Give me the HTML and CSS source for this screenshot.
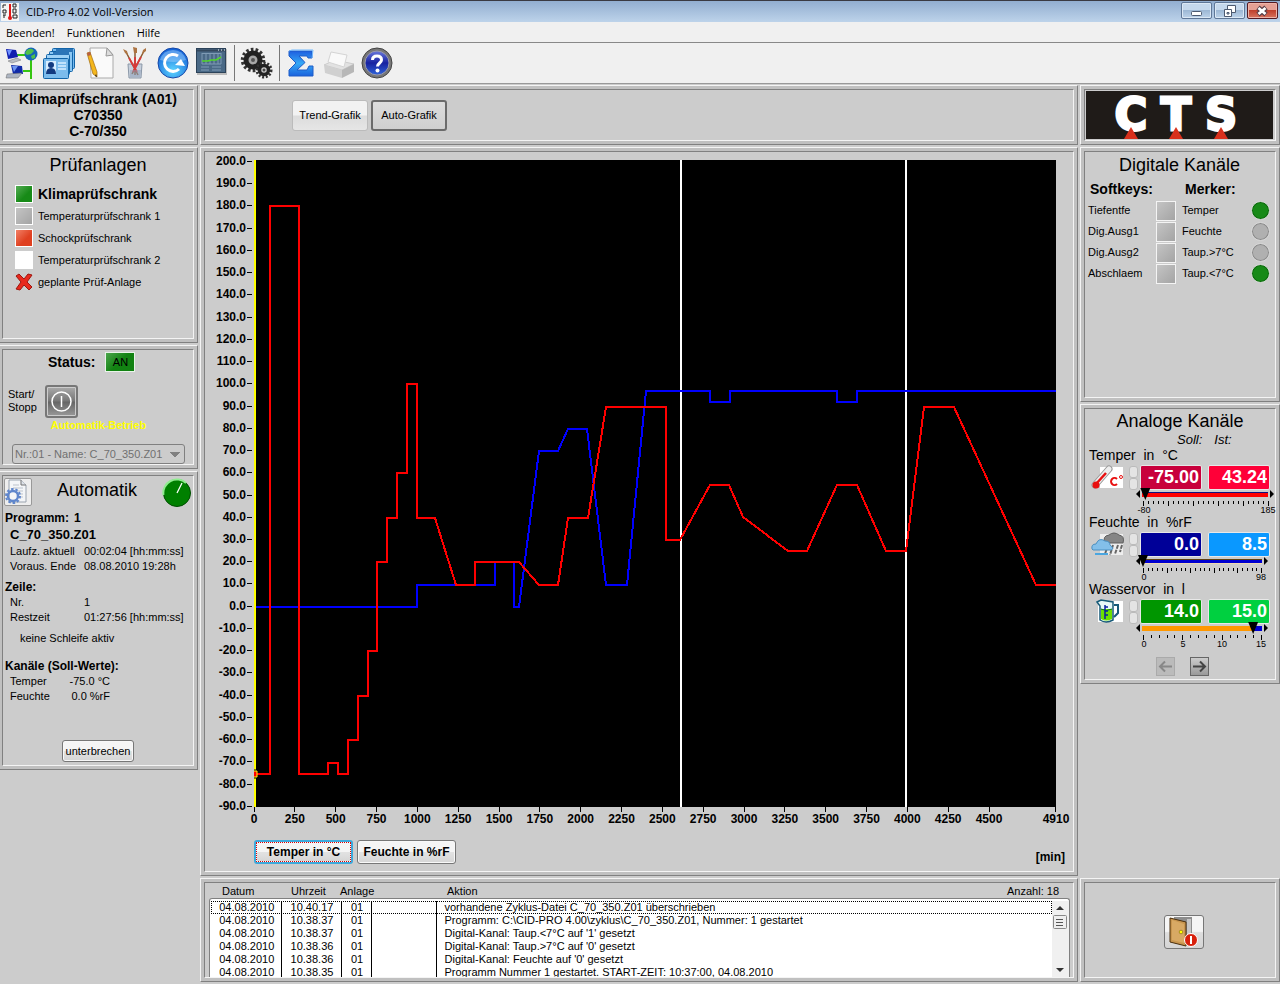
FILE: index.html
```html
<!DOCTYPE html>
<html lang="de">
<head>
<meta charset="utf-8">
<title>CID-Pro 4.02 Voll-Version</title>
<link rel="stylesheet" href="styles.css">
</head>
<body>
<header class="titlebar">
  <svg class="app-icon" width="18" height="18" viewBox="0 0 18 18"><rect width="18" height="18" fill="#f4f4f4"/><path d="M5 2H2V5M2 7H5V10H2ZM2 12H5M3 12V15M12 1H15V4H12ZM12 6H15V10H12ZM12 12H16V15H12Z" fill="none" stroke="#222" stroke-width="1"/><path d="M9 1V14" stroke="#e01818" stroke-width="2"/><circle cx="9" cy="15" r="2" fill="#e01818"/></svg>
  <span class="title-text">CID-Pro 4.02 Voll-Version</span>
  <div class="window-buttons">
    <button class="win-btn" aria-label="Minimieren"><svg width="28" height="14" viewBox="0 0 28 14"><rect x="9.500" y="7.500" width="10" height="4" rx="1" fill="#fff" stroke="#4d5a70"/></svg></button>
    <button class="win-btn" aria-label="Wiederherstellen"><svg width="28" height="14" viewBox="0 0 28 14"><path d="M12.500 1.500H20.500V8.500H12.500Z" fill="#fff" stroke="#4d5a70"/><path d="M9.500 5.500H16.500V12.500H9.500Z" fill="#fff" stroke="#4d5a70"/><path d="M12 8.500H14V10H12Z" fill="#b8cbe0" stroke="#4d5a70"/></svg></button>
    <button class="win-btn win-close" aria-label="Schließen"><svg width="28" height="14" viewBox="0 0 28 14"><path d="M10 3.500L18 10.500M18 3.500L10 10.500" stroke="#5a4048" stroke-width="5"/><path d="M10.500 4L17.500 10M17.500 4L10.500 10" stroke="#fff" stroke-width="2.800"/></svg></button>
  </div>
</header>
<nav class="menubar">
  <button class="menu-item">Beenden!</button>
  <button class="menu-item">Funktionen</button>
  <button class="menu-item">Hilfe</button>
</nav>
<div class="toolbar" role="toolbar">
  <button class="tool" aria-label="Netzwerk"><svg width="34" height="34" viewBox="0 0 34 34"><path d="M13 9H26M27 12V33M19 25H27" fill="none" stroke="#35c512" stroke-width="2"/><path d="M2 3L12 4 14 11 4 13Z" fill="#101fb0"/><path d="M3 4L8 4 5 10Z" fill="#6f92ff"/><path d="M4 15L13 12 17 14 8 17Z" fill="#b8bcc4" stroke="#777" stroke-width=".5"/><circle cx="27" cy="8" r="6.500" fill="#1565b8"/><path d="M23 4Q28 1 30 5L27 8 23 9 21 7ZM27 10L31 8 31 12 28 13Z" fill="#4fc04a"/><path d="M7 19L18 20 19 28 9 28Z" fill="#102aa8"/><path d="M8 20L14 20 10 26Z" fill="#6d95f0"/><path d="M3 28L18 27 14 32 2 32Z" fill="#aeb6c2" stroke="#666" stroke-width=".5"/></svg></button>
  <button class="tool" aria-label="Benutzer"><svg width="34" height="34" viewBox="0 0 34 34"><g stroke="#1264a8"><rect x="10.500" y="2.500" width="22" height="20" rx="1" fill="#76b9ee"/><rect x="7.500" y="5.500" width="23" height="20" rx="1" fill="#8cc8f4"/><rect x="4.500" y="8.500" width="23" height="20" rx="1" fill="#9fd2f7"/><rect x="1.500" y="12.500" width="25" height="20" rx="1" fill="#7bbbec"/></g><path d="M14 3H31V6H14ZM11 6H27V9H11Z" fill="#2c75b8"/><rect x="4" y="15" width="10" height="13" fill="#d8eeff"/><circle cx="9" cy="19" r="3" fill="#123a80"/><path d="M4 28Q4 22 9 22T14 28Z" fill="#123a80"/><path d="M16 17H24M16 20H24M16 23H24" stroke="#d8eeff" stroke-width="1.500"/></svg></button>
  <button class="tool" aria-label="Dokument"><svg width="34" height="34" viewBox="0 0 34 34"><path d="M10 2H27L33 9V32H11Z" fill="#fafafa" stroke="#aaa"/><path d="M27 2L26 10 33 9Z" fill="#ddd" stroke="#999"/><path d="M7 7L10 6 17 26 17 31 13 28Z" fill="#f4b71c" stroke="#a06a10" stroke-width=".7"/><path d="M7 7L10 6 11 9 8 10Z" fill="#b65f45"/><path d="M16 28L17 31 15 30Z" fill="#222"/></svg></button>
  <button class="tool" aria-label="Pinsel"><svg width="34" height="34" viewBox="0 0 34 34"><path d="M10 18L11 32H23L24 18Z" fill="#c7d0dc" stroke="#8b98a8"/><path d="M8 6L20 29M17 5L17 29M26 5L14 28" stroke="#8a5a30" stroke-width="1.500"/><path d="M11 12L19 26M17 11V22M23 11L15 26" stroke="#d83a3a" stroke-width="1.800"/><path d="M5 3L9 5 10 9 7 7ZM15 1L19 2 19 7 16 7ZM28 2L28 5 24 8 25 4Z" fill="#ad7442"/><path d="M12 24L23 24 22 31H12Z" fill="#8e9eb8" opacity=".55"/></svg></button>
  <button class="tool" aria-label="Aktualisieren"><svg width="34" height="34" viewBox="0 0 34 34"><defs><radialGradient id="gBlue" cx=".5" cy=".75" r=".7"><stop offset="0" stop-color="#5cd4ff"/><stop offset="1" stop-color="#1464d8"/></radialGradient></defs><circle cx="17" cy="17" r="15" fill="url(#gBlue)" stroke="#1748a8"/><path d="M4 14Q7 4 17 4T30 14Q18 18 4 14Z" fill="#a9d5ff" opacity=".45"/><path d="M22 10A8.500 8.500 0 1 0 23 23" fill="none" stroke="#fff" stroke-width="3"/><path d="M19 19L25 13 29 20Z" fill="#fff"/></svg></button>
  <button class="tool" aria-label="Grafik"><svg width="34" height="34" viewBox="0 0 34 34"><rect x="3" y="3" width="30" height="26" fill="#bbb"/><rect x="2.500" y="2.500" width="29" height="24" fill="#4a6986" stroke="#2b4259"/><path d="M3 4.500H31" stroke="#34495e" stroke-width="2"/><path d="M24 4H25M27 4H28M30 4H31" stroke="#fff"/><path d="M8 7V18M12 7V18M16 7V18M20 7V18M24 7V18M27 7V18M8 7.500H27M8 18H27M7 21H15M18 21H27M7 24H15M18 24H27" fill="none" stroke="#7f9bb5"/><path d="M8 15H14L17 14H22L27 11" fill="none" stroke="#52d629" stroke-width="1.500"/></svg></button>
  <span class="tool-sep"></span>
  <button class="tool" aria-label="Einstellungen"><svg width="34" height="34" viewBox="0 0 34 34"><circle cx="14" cy="14" r="10.500" fill="none" stroke="#333" stroke-width="3.500" stroke-dasharray="2.600 2.100"/><circle cx="14" cy="14" r="7" fill="#a8a8a8" stroke="#222" stroke-width="5"/><circle cx="14" cy="14" r="2" fill="#555"/><circle cx="25" cy="24" r="7" fill="none" stroke="#333" stroke-width="3" stroke-dasharray="2 1.600"/><circle cx="25" cy="24" r="4.500" fill="#ccc" stroke="#222" stroke-width="3.500"/><circle cx="25" cy="24" r="1.500" fill="#444"/></svg></button>
  <span class="tool-sep"></span>
  <button class="tool" aria-label="Summe"><svg width="34" height="34" viewBox="0 0 34 34"><defs><linearGradient id="gSigma" x2="0" y2="1"><stop offset="0" stop-color="#1f5fe0"/><stop offset=".5" stop-color="#34a8f5"/><stop offset="1" stop-color="#1a62dd"/></linearGradient></defs><path d="M5 5H28V12H24L23 10H15L21 16.500 13 24H23L25 20H29V30H5V24L12 17 5 10Z" fill="url(#gSigma)" stroke="#1e5cc8"/><path d="M5 5L8 4H29L28 12" fill="none" stroke="#72baff"/></svg></button>
  <button class="tool" aria-label="Drucken"><svg width="34" height="34" viewBox="0 0 34 34"><path d="M2 19L13 14 32 18 20 24Z" fill="#e2e2e2" stroke="#ccc"/><path d="M9 6L25 9 22 21 6 16Z" fill="#f9f9f9" stroke="#d4d4d4"/><path d="M2 19L20 24V32L3 27Z" fill="#d0d0d0"/><path d="M20 24L32 18V26L20 32Z" fill="#b7b7b7"/></svg></button>
  <button class="tool" aria-label="Hilfe"><svg width="34" height="34" viewBox="0 0 34 34"><defs><linearGradient id="gHelp" x2="0" y2="1"><stop offset="0" stop-color="#6a78dc"/><stop offset=".5" stop-color="#1722a0"/><stop offset="1" stop-color="#2f63d8"/></linearGradient></defs><circle cx="17" cy="17" r="15" fill="#777" stroke="#444"/><circle cx="17" cy="17" r="12" fill="url(#gHelp)" stroke="#99a"/><path d="M12.500 14Q12.500 10 17 10T21.500 14C21.500 17 17.500 17 17.500 20.500" fill="none" stroke="#fff" stroke-width="3"/><circle cx="17.500" cy="24.500" r="2" fill="#fff"/></svg></button>
</div>

<main class="workspace">
  <div class="column">
    <section class="panel"><div class="panel-body head-body device">Klimaprüfschrank (A01)<br>C70350<br>C-70/350</div></section>

    <section class="panel"><div class="panel-body plants">
      <h2 class="heading">Prüfanlagen</h2>
      <ul class="plant-list">
        <li class="plant plant-active"><span class="led led-green"></span>Klimaprüfschrank</li>
        <li class="plant"><span class="led led-grey"></span>Temperaturprüfschrank 1</li>
        <li class="plant"><span class="led led-red"></span>Schockprüfschrank</li>
        <li class="plant"><span class="led led-white"></span>Temperaturprüfschrank 2</li>
        <li class="plant"><svg width="18" height="18" viewBox="0 0 18 18"><path d="M1 3L4 1 9 6 13 1 17 2 12 9 17 14 14 17 9 12 5 17 1 16 6 9Z" fill="#e8281c" stroke="#9c1710"/></svg>geplante Prüf-Anlage</li>
      </ul>
    </div></section>

    <section class="panel"><div class="panel-body status">
      <div class="status-line"><span class="subhead">Status:</span><span class="on-badge">AN</span></div>
      <div class="power-line"><span class="power-label" id="power-label">Start/<br>Stopp</span>
        <button class="power-btn" aria-labelledby="power-label"><svg width="29" height="29" viewBox="0 0 29 29"><circle cx="14.500" cy="14.500" r="9.500" fill="none" stroke="#fff" stroke-width="1.500"/><path d="M14.500 9V20" stroke="#fff" stroke-width="1.500"/></svg></button></div>
      <div class="mode">Automatik-Betrieb</div>
      <select class="program-select" aria-label="Programm" disabled><option>Nr.:01 - Name: C_70_350.Z01</option></select>
    </div></section>

    <section class="panel"><div class="panel-body auto">
      <div class="auto-head">
        <button class="auto-btn" aria-label="Programm bearbeiten"><svg width="25" height="26" viewBox="0 0 25 26"><path d="M4 1H16L21 6V23H4Z" fill="#f4f6f8" stroke="#9aa3ae"/><path d="M16 1V6H21" fill="#dde2e8" stroke="#777"/><path d="M8 6H14M8 9H18M13 12H18M15 15H18M16 18H18" stroke="#bcc3cc"/><circle cx="8" cy="17" r="5" fill="none" stroke="#5f86cc" stroke-width="2.500"/><circle cx="8" cy="17" r="7" fill="none" stroke="#5f86cc" stroke-width="2" stroke-dasharray="2.500 1.900"/></svg></button>
        <h2 class="heading">Automatik</h2>
        <svg width="30" height="30" viewBox="0 0 30 30"><circle cx="15" cy="15" r="13.500" fill="#008000" stroke="#004d00"/><path d="M1.500 17A13.500 13.500 0 0 1 24 5" fill="none" stroke="#8fee8f" stroke-width="2"/><path d="M15 15L20 5" stroke="#fff" stroke-width="1.300"/></svg>
      </div>
      <div class="prog-line">Programm:<span>1</span></div>
      <div class="prog-name">C_70_350.Z01</div>
      <dl class="facts"><dt>Laufz. aktuell</dt><dd>00:02:04 [hh:mm:ss]</dd><dt>Voraus. Ende</dt><dd>08.08.2010 19:28h</dd></dl>
      <h3 class="minor">Zeile:</h3>
      <dl class="facts"><dt>Nr.</dt><dd>1</dd><dt>Restzeit</dt><dd>01:27:56 [hh:mm:ss]</dd></dl>
      <div class="loop">keine Schleife aktiv</div>
      <h3 class="minor">Kanäle (Soll-Werte):</h3>
      <dl class="facts facts-values"><dt>Temper</dt><dd>-75.0 °C</dd><dt>Feuchte</dt><dd>0.0 %rF</dd></dl>
      <button class="btn interrupt">unterbrechen</button>
    </div></section>
  </div>

  <div class="column">
    <section class="panel"><div class="panel-body head-body tabs">
      <button class="tab">Trend-Grafik</button>
      <button class="tab tab-on" aria-pressed="true">Auto-Grafik</button>
    </div></section>

    <section class="panel panel-grow"><div class="panel-body chart">
      <div class="y-axis">
        <span>200.0</span><span>190.0</span><span>180.0</span><span>170.0</span><span>160.0</span><span>150.0</span><span>140.0</span><span>130.0</span><span>120.0</span><span>110.0</span><span>100.0</span><span>90.0</span><span>80.0</span><span>70.0</span><span>60.0</span><span>50.0</span><span>40.0</span><span>30.0</span><span>20.0</span><span>10.0</span><span>0.0</span><span>-10.0</span><span>-20.0</span><span>-30.0</span><span>-40.0</span><span>-50.0</span><span>-60.0</span><span>-70.0</span><span>-80.0</span><span>-90.0</span>
      </div>
      <div class="plot"><svg class="plot-svg" viewBox="254 160 802 647" preserveAspectRatio="none">
        <rect x="254" y="160" width="802" height="647" fill="#000"/>
        <g class="lines">
          <path d="M681 160V807M906 160V807" stroke="#fff"/>
          <polyline stroke="#00f" points="255,607 417,607 417,585 495,585 495,562 514,562 514,607 519,607 539,451 558,451 568,429 587,429 606,585 627,585 646,391 710,391 710,402 730,402 730,391 837,391 837,402 857,402 857,391 1056,391"/>
          <polyline stroke="#f00" points="255,774 270,774 270,206 299,206 299,774 328,774 328,763 338,763 338,774 348,774 348,740 358,740 358,696 368,696 368,651 377,651 377,562 387,562 387,518 397,518 397,473 407,473 407,384 417,384 417,518 435,518 456,585 475,585 475,562 519,562 539,585 558,585 568,518 588,518 606,407 666,407 666,540 680,540 710,485 729,485 743,517 788,551 807,551 837,485 857,485 886,551 906,551 924,407 954,407 1036,585 1056,585"/>
          <path d="M255 160V807" stroke="#ff0"/>
        </g>
        <path d="M254 771H257V777H254" fill="#f00" stroke="#ff0"/><path d="M253 770H256M253 778H256" stroke="#000"/>
      </svg></div>
      <div class="x-axis">
        <span>0</span><span>250</span><span>500</span><span>750</span><span>1000</span><span>1250</span><span>1500</span><span>1750</span><span>2000</span><span>2250</span><span>2500</span><span>2750</span><span>3000</span><span>3250</span><span>3500</span><span>3750</span><span>4000</span><span>4250</span><span>4500</span><span>4910</span>
      </div>
      <div class="chart-foot">
        <button class="btn channel channel-on">Temper in °C</button>
        <button class="btn channel">Feuchte in %rF</button>
        <span class="unit">[min]</span>
      </div>
    </div></section>

    <section class="panel"><div class="panel-body log">
      <div class="log-head"><span class="c-date">Datum</span><span class="c-time">Uhrzeit</span><span class="c-plant">Anlage</span><span class="c-action">Aktion</span><span class="c-count">Anzahl: 18</span></div>
      <div class="log-box">
        <table class="log-table" aria-label="Protokoll">
          <colgroup><col class="w-date"><col class="w-time"><col class="w-plant"><col class="w-blank"><col></colgroup>
          <tbody>
          <tr class="log-sel"><td>04.08.2010</td><td>10.40.17</td><td>01</td><td></td><td>vorhandene Zyklus-Datei C_70_350.Z01 überschrieben</td></tr>
          <tr><td>04.08.2010</td><td>10.38.37</td><td>01</td><td></td><td>Programm: C:\CID-PRO 4.00\zyklus\C_70_350.Z01, Nummer: 1 gestartet</td></tr>
          <tr><td>04.08.2010</td><td>10.38.37</td><td>01</td><td></td><td>Digital-Kanal: Taup.&lt;7°C auf '1' gesetzt</td></tr>
          <tr><td>04.08.2010</td><td>10.38.36</td><td>01</td><td></td><td>Digital-Kanal: Taup.&gt;7°C auf '0' gesetzt</td></tr>
          <tr><td>04.08.2010</td><td>10.38.36</td><td>01</td><td></td><td>Digital-Kanal: Feuchte auf '0' gesetzt</td></tr>
          <tr><td>04.08.2010</td><td>10.38.35</td><td>01</td><td></td><td>Programm Nummer 1 gestartet. START-ZEIT: 10:37:00, 04.08.2010</td></tr>
          </tbody>
        </table>
        <div class="scroll">
          <svg width="14" height="14" viewBox="0 0 14 14"><path d="M3 9L7 5 11 9Z" fill="#333"/></svg>
          <svg width="14" height="15" viewBox="0 0 14 15"><rect x=".5" y=".5" width="13" height="13" rx="1" fill="#eee" stroke="#888"/><path d="M3 4.500H10M3 7.500H10M3 10.500H10" stroke="#555"/></svg>
          <svg class="scroll-end" width="14" height="14" viewBox="0 0 14 14"><path d="M3 5L7 9 11 5Z" fill="#333"/></svg>
        </div>
      </div>
    </div></section>
  </div>

  <div class="column">
    <section class="panel"><div class="panel-body head-body brand">
      <div class="logo"><span>C</span><span>T</span><span>S</span></div>
    </div></section>

    <section class="panel"><div class="panel-body digital">
      <h2 class="heading">Digitale Kanäle</h2>
      <div class="digital-grid">
        <h3 class="subhead">Softkeys:</h3><h3 class="subhead flag-head">Merker:</h3>
        <span>Tiefentfe</span><button class="softkey" aria-label="Tiefentfe"></button><span>Temper</span><i class="lamp lamp-on"></i>
        <span>Dig.Ausg1</span><button class="softkey" aria-label="Dig.Ausg1"></button><span>Feuchte</span><i class="lamp"></i>
        <span>Dig.Ausg2</span><button class="softkey" aria-label="Dig.Ausg2"></button><span>Taup.&gt;7°C</span><i class="lamp"></i>
        <span>Abschlaem</span><button class="softkey" aria-label="Abschlaem"></button><span>Taup.&lt;7°C</span><i class="lamp lamp-on"></i>
      </div>
    </div></section>

    <section class="panel"><div class="panel-body analog">
      <h2 class="heading">Analoge Kanäle</h2>
      <div class="analog-cols"><span>Soll:</span><span>Ist:</span></div>

      <div class="channel-row">
        <label class="ch-label" for="soll-t">Temper&nbsp; in&nbsp; °C</label>
        <div class="ch-values">
          <svg class="ch-icon" width="33" height="25" viewBox="0 0 33 25"><rect x="9" y="2" width="23" height="21" fill="#fff"/><path d="M4 20L18 4" stroke="#999" stroke-width="7" stroke-linecap="round"/><path d="M4 20L18 4" stroke="#eee" stroke-width="5" stroke-linecap="round"/><path d="M5 19L15 8" stroke="#e81010" stroke-width="2.500"/><circle cx="5" cy="20" r="3.500" fill="#e81010"/><path d="M26 14A3.500 3.500 0 1 0 26 19" fill="none" stroke="#e81010" stroke-width="2"/><circle cx="30" cy="12" r="1.500" fill="none" stroke="#e81010"/></svg>
          <span class="spin"><button aria-label="mehr"></button><button aria-label="weniger"></button></span>
          <input class="val t-soll" id="soll-t" value="-75.00"><input class="val t-ist" aria-label="Temper Ist" value="43.24" readonly>
        </div>
        <div class="slide slide-long"><i class="arr arr-l"></i><input type="range" class="range range-t" aria-label="Temper" min="-80" max="185" value="-75"><i class="arr arr-r"></i></div>
        <div class="ticks ticks-long"></div>
        <div class="scale scale-long"><span>-80</span><span>185</span></div>
      </div>

      <div class="channel-row">
        <label class="ch-label" for="soll-f">Feuchte&nbsp; in&nbsp; %rF</label>
        <div class="ch-values">
          <svg class="ch-icon" width="33" height="25" viewBox="0 0 33 25"><rect x="9" y="2" width="23" height="21" fill="#eee"/><path d="M14 11Q11 4 18 3 23-1 28 3 34 4 32 11Z" fill="#858585" stroke="#5d5d5d"/><path d="M17 13L14 22M22 13L19 23M27 13L24 22M31 13L29 20" stroke="#666" stroke-width="2" stroke-dasharray="4 1"/><path d="M1 17Q0 12 5 12 8 5 14 9 19 9 19 13 24 17 20 18H2Z" fill="#83bfe9" stroke="#4b8fc0"/><path d="M4 22H17" stroke="#4aa6e0" stroke-width="2"/></svg>
          <span class="spin"><button aria-label="mehr"></button><button aria-label="weniger"></button></span>
          <input class="val f-soll" id="soll-f" value="0.0"><input class="val f-ist" aria-label="Feuchte Ist" value="8.5" readonly>
        </div>
        <div class="slide"><i class="arr arr-l"></i><input type="range" class="range range-f" aria-label="Feuchte" min="0" max="98" value="0"><i class="arr arr-r"></i></div>
        <div class="ticks"></div>
        <div class="scale"><span>0</span><span>98</span></div>
      </div>

      <div class="channel-row">
        <label class="ch-label" for="soll-w">Wasservor&nbsp; in&nbsp; l</label>
        <div class="ch-values">
          <svg class="ch-icon" width="33" height="25" viewBox="0 0 33 25"><rect x="7" y="2" width="25" height="21" fill="#fff"/><path d="M6 3L10 1 22 3V21Q15 25 9 21V7Z" fill="#e8f8f8" stroke="#175a78" stroke-width="1.500"/><path d="M10 10H21V20Q15 23 10 20Z" fill="#6ce000"/><path d="M10 10Q15 13 21 10" fill="none" stroke="#087020"/><path d="M23 6H27V14L23 18" fill="none" stroke="#175a78" stroke-width="2"/><path d="M14 6V20M14 8H17M14 12H17M14 16H17" stroke="#0a1fa0" stroke-width="1.500"/></svg>
          <span class="spin"><button aria-label="mehr"></button><button aria-label="weniger"></button></span>
          <input class="val w-soll" id="soll-w" value="14.0"><input class="val w-ist" aria-label="Wasservor Ist" value="15.0" readonly>
        </div>
        <div class="slide"><i class="arr arr-l"></i><input type="range" class="range range-w" aria-label="Wasservor" min="0" max="15" value="14"><i class="arr arr-r"></i></div>
        <div class="ticks ticks-coarse"></div>
        <div class="scale"><span>0</span><span>5</span><span>10</span><span>15</span></div>
      </div>

      <div class="pager">
        <button class="page-btn" aria-label="zurück" disabled><svg width="17" height="17" viewBox="0 0 17 17"><path d="M15 8.500H3M8 3.500L3 8.500 8 13.500" fill="none" stroke="#888" stroke-width="2"/></svg></button>
        <button class="page-btn" aria-label="weiter"><svg width="17" height="17" viewBox="0 0 17 17"><path d="M2 8.500H14M9 3.500L14 8.500 9 13.500" fill="none" stroke="#444" stroke-width="2"/></svg></button>
      </div>
    </div></section>

    <section class="panel panel-end"><div class="panel-body exit">
      <button class="exit-btn" aria-label="Beenden"><svg width="36" height="32" viewBox="0 0 36 32"><path d="M8 1H26V27H8Z" fill="#8d8d8d"/><path d="M21 3H25V24H21Z" fill="#c6c6c6"/><path d="M4 2L20 6V30L4 26Z" fill="#c9964f" stroke="#4a2e0c"/><path d="M6 4L18 8V27L6 24Z" fill="#d8a964"/><circle cx="15" cy="16" r="1.800" fill="#ff0" stroke="#6a5010" stroke-width=".5"/><circle cx="25" cy="24" r="6.500" fill="#d8200c" stroke="#fff"/><path d="M25 20V28" stroke="#fff" stroke-width="2"/></svg></button>
    </div></section>
  </div>
</main>
</body>
</html>
```

FILE: styles.css
```css
* { box-sizing: border-box; }
body {
  margin: 0;
  min-height: 100vh;
  display: flex;
  flex-direction: column;
  background: #ccc;
  color: #000;
  font-family: "Liberation Sans", Arial, sans-serif;
  font-size: 11px;
  line-height: 15px;
}
button, input, select { font: inherit; color: inherit; margin: 0; padding: 0; }
svg { display: block; flex: none; }
h2, h3, ul, dl, dd { margin: 0; padding: 0; }

.titlebar {
  display: flex;
  align-items: center;
  height: 22px;
  padding: 0 2px 0 1px;
  border-top: 1px solid #3a3a42;
  background: linear-gradient(#92aed0, #bdd3ea);
  font-family: "Open Sans", sans-serif;
}
.title-text { flex: 1; padding-left: 7px; }
.window-buttons { display: flex; gap: 2px; align-self: flex-start; padding-top: 1px; }
.win-btn {
  width: 31px;
  height: 17px;
  border: 1px solid #5f7797;
  border-radius: 2px;
  background: linear-gradient(#c5d8ec 45%, #9db8d5 50%, #bdd3ea);
  box-shadow: inset 0 0 0 1px #dbe8f5;
}
.win-close { border-color: #551a22; background: linear-gradient(#e5a094 45%, #c0402c 50%, #d8745f); box-shadow: inset 0 0 0 1px #eeb4a8; }
.menubar {
  display: flex;
  gap: 12px;
  height: 21px;
  padding: 0 6px;
  background: #f0f0f0;
  border-bottom: 1px solid #888;
  font-family: "Open Sans", sans-serif;
}
.menu-item { border: 0; background: none; line-height: 17px; }
.toolbar {
  display: flex;
  align-items: center;
  height: 41px;
  padding-left: 2px;
  background: #f0f0f0;
  border-bottom: 1px solid #999;
}
.tool { width: 38px; height: 36px; border: 0; background: none; padding: 0 2px; }
.tool-sep { width: 1px; height: 36px; margin: 0 2px 0 4px; background: #777; }

.workspace {
  flex: 1;
  display: grid;
  grid-template-columns: 200px minmax(0, 1fr) 200px;
  gap: 2px;
  margin-left: -2px;
  padding: 1px 0 2px;
}
.column { display: flex; flex-direction: column; gap: 2px; min-width: 0; }
.panel {
  display: flex;
  padding: 3px;
  border: 1px solid;
  border-color: #f4f4f4 #808080 #808080 #f4f4f4;
  background: #c0c0c0;
}
.panel-body {
  flex: 1;
  min-width: 0;
  border: 1px solid;
  border-color: #808080 #f4f4f4 #f4f4f4 #808080;
  background: #ccc;
}
.panel-grow { flex: 1; }
.panel-end { margin-top: auto; }
.head-body { height: 52px; }
.heading { font-size: 18px; line-height: 24px; font-weight: 400; text-align: center; }
.subhead { font-size: 14px; line-height: 18px; font-weight: 700; }
.minor { font-size: 12px; line-height: 15px; font-weight: 700; padding-left: 1px; }

.device { font-size: 14px; line-height: 16px; font-weight: 700; text-align: center; padding-top: 1px; }

.plants { min-height: 188px; padding: 1px 12px; }
.plant-list { list-style: none; padding-top: 6px; }
.plant { display: flex; align-items: center; gap: 5px; height: 22px; }
.plant-active { font-size: 14px; font-weight: 700; }
.led { width: 18px; height: 18px; border: 1px solid #fff; }
.led-green { background: linear-gradient(135deg, #55ad55, #178a17 60%); }
.led-grey { background: linear-gradient(135deg, #c4c4c4, #a4a4a4); }
.led-red { background: linear-gradient(135deg, #f28066, #df4020 60%); }
.led-white { background: #fff; }

.status { min-height: 116px; padding: 2px 8px 0 9px; }
.status-line { display: flex; gap: 10px; padding-left: 36px; align-items: center; }
.on-badge { width: 30px; height: 20px; border: 1px solid #e8f4e8; background: linear-gradient(135deg, #4ba54b, #128212 50%); text-align: center; line-height: 18px; }
.power-line { display: flex; gap: 8px; padding-top: 13px; margin-left: -4px; }
.power-label { line-height: 13px; padding-top: 3px; }
.power-btn { width: 33px; height: 33px; border: 2px solid #777; border-radius: 3px; background: linear-gradient(#aaa, #777 48%, #666 52%, #999); box-shadow: inset 0 0 0 1px #ccc; }
.mode { color: #ff0; font-weight: 700; text-align: center; line-height: 14px; }
.program-select {
  appearance: none;
  width: 100%;
  height: 20px;
  margin-top: 12px;
  padding: 0 2px;
  border: 1px solid #808080;
  border-radius: 3px;
  background: conic-gradient(from -45deg at 50% 100%, #808080 90deg, transparent 0) right 4px center / 10px 5px no-repeat, #ccc;
  color: #707070;
  opacity: 1;
}

.auto { min-height: 291px; padding: 2px 1px 3px 1px; display: flex; flex-direction: column; }
.auto-head { display: flex; justify-content: space-between; align-items: flex-start; padding-bottom: 2px; }
.auto-btn { width: 28px; height: 28px; border: 1px solid #999; border-radius: 2px; background: #eee; }
.prog-line { font-size: 12px; line-height: 16px; font-weight: 700; padding-left: 1px; }
.prog-line span { padding-left: 5px; }
.prog-name { font-size: 13px; line-height: 18px; font-weight: 700; padding: 0 6px; }
.facts { display: grid; grid-template-columns: 74px 1fr; padding-left: 6px; }
.facts + .minor { margin-top: 6px; }
.facts-values { grid-template-columns: 44px 56px; }
.facts-values dd { text-align: right; }
.loop { padding: 6px 16px 13px; }
.interrupt { width: 72px; height: 22px; margin: auto 0 0 58px; }
.btn { border: 1px solid #777; border-radius: 3px; background: linear-gradient(#f5f5f5 48%, #e2e2e2 52%, #d5d5d5); box-shadow: inset 0 0 0 1px #f8f8f8; }

.tabs { display: flex; align-items: center; gap: 3px; padding-left: 87px; }
.tab { width: 76px; height: 31px; border: 1px solid #bbb; border-radius: 3px; background: linear-gradient(#f2f2f2 48%, #dcdcdc 52%, #e6e6e6); }
.tab-on { border: 2px solid #6b6b6b; background: linear-gradient(#ddd, #cfcfcf); }

.chart {
  display: grid;
  grid-template-columns: 49px minmax(0, 1fr);
  grid-template-rows: minmax(400px, 1fr) 33px 31px;
  padding: 8px 17px 0 0;
  font-size: 12px;
  font-weight: 700;
}
.y-axis { display: flex; flex-direction: column; justify-content: space-between; margin: -6px 0 -7px; }
.y-axis span { display: flex; align-items: center; justify-content: flex-end; gap: 1px; padding-right: 2px; height: 15px; }
.y-axis span::after { content: ""; width: 5px; height: 1px; background: #000; }
.plot { position: relative; }
.plot-svg { position: absolute; inset: 0; width: 100%; height: 100%; }
.lines * { fill: none; stroke-width: 2px; vector-effect: non-scaling-stroke; shape-rendering: crispEdges; }
.x-axis { grid-column: 2; display: grid; grid-template-columns: repeat(18, minmax(0, 250fr)) minmax(0, 410fr) 0; line-height: 14px; }
.x-axis span { width: 40px; margin-left: -20px; text-align: center; }
.x-axis span::before { content: ""; display: block; width: 1px; height: 5px; margin: 0 auto; background: #000; }
.chart-foot { grid-column: 2; display: flex; gap: 4px; }
.channel { width: 99px; height: 24px; font-weight: 700; }
.channel-on { border: 2px solid #3da9dc; outline: 1px dotted #d00; outline-offset: -3px; }
.unit { margin: 10px -9px 0 auto; }

.log { padding: 0 3px 0 4px; }
.log-head { display: flex; height: 15px; padding: 1px 11px 0 1px; }
.c-date { width: 72px; padding-left: 12px; }
.c-time { width: 58px; padding-left: 9px; }
.c-plant { width: 97px; }
.c-action { flex: 1; padding-left: 10px; }
.log-box { display: flex; height: 79px; overflow: hidden; border: 1px solid #808080; border-bottom: 0; border-radius: 3px 3px 0 0; background: #fff; padding: 2px 0 0 1px; }
.log-table { flex: 1; width: 100%; table-layout: fixed; border-collapse: collapse; align-self: flex-start; line-height: 13px; }
.log-table td { height: 13px; padding: 0 0 0 2px; text-align: center; white-space: nowrap; border-right: 1px solid #000; }
.log-table td:last-child { padding-left: 8px; text-align: left; border-right: 0; }
.log-sel { outline: 1px dotted #000; outline-offset: -1px; }
.w-date { width: 70px; }
.w-time { width: 60px; }
.w-plant { width: 30px; }
.w-blank { width: 65px; }
.scroll { display: flex; flex-direction: column; width: 17px; padding-left: 1px; background: #f0f0f0; }
.scroll-end { margin-top: auto; }

.brand { padding: 1px 2px 1px 1px; }
.logo {
  height: 48px;
  display: grid;
  grid-template-columns: 45px 45px 45px;
  justify-content: center;
  padding-right: 7px;
  background: #1f1b18;
  color: #fff;
  font: 700 44px/48px "DejaVu Sans", sans-serif;
  text-align: center;
}
.logo span { position: relative; -webkit-text-stroke: 3px #fff; }
.logo span::after {
  content: "";
  position: absolute;
  bottom: 0;
  left: calc(50% - 7px);
  width: 14px;
  height: 12px;
  background: #d8301c;
  clip-path: polygon(50% 0, 100% 100%, 0 100%);
}

.digital { min-height: 247px; padding: 1px 4px 0 3px; }
.digital-grid { display: grid; grid-template-columns: 68px 26px 1fr 20px; grid-template-rows: 23px; grid-auto-rows: 21px; align-items: center; }
.digital-grid .subhead { grid-column: span 2; padding-left: 2px; }
.digital-grid .flag-head { padding-left: 3px; }
.softkey { width: 20px; height: 20px; border: 1px solid #f4f4f4; background: linear-gradient(135deg, #c4c4c4, #a4a4a4); }
.lamp { width: 19px; height: 19px; border: 1px solid #d8d8d8; border-radius: 50%; background: #b0b0b0; box-shadow: inset 0 0 0 1px #8a8a8a; }
.lamp-on { background: #178a17; box-shadow: inset 0 0 0 1px #0f6a0f; }

.analog { min-height: 272px; padding: 0 4px; }
.analog-cols { display: flex; gap: 12px; padding-left: 88px; font-size: 13px; font-style: italic; line-height: 13px; }
.channel-row { height: 67px; }
.ch-label { display: block; font-size: 14px; line-height: 18px; }
.ch-values { display: flex; align-items: center; height: 25px; margin-top: 1px; }
.ch-icon { width: 33px; margin-left: 2px; }
.spin { display: flex; flex-direction: column; width: 9px; margin: 0 2px 0 5px; }
.spin button { height: 12px; border: 1px solid #bbb; border-radius: 3px; background: #e4e4e4; }
.val { width: 62px; min-width: 0; height: 25px; padding-right: 2px; border: 1px solid #e8e8e8; border-radius: 2px; color: #fff; font-size: 18px; font-weight: 700; text-align: right; }
.val + .val { margin-left: 6px; }
.t-soll { background: #c8003c; }
.t-ist { background: #ff0038; }
.f-soll { background: #000098; }
.f-ist { background: #0a98ff; }
.w-soll { background: #009600; }
.w-ist { background: #00d040; }
.slide { display: flex; align-items: center; height: 8px; margin: 0 3px 0 47px; }
.slide-long { margin-right: -3px; }
.arr { flex: none; width: 4px; height: 8px; background: #000; }
.arr-l { clip-path: polygon(100% 0, 0 50%, 100% 100%); }
.arr-r { clip-path: polygon(0 0, 100% 50%, 0 100%); }
.range { appearance: none; flex: 1; min-width: 0; height: 12px; margin: 0 -2px; background: linear-gradient(#101080 1px, #f00 0) center / calc(100% - 8px) 5px no-repeat; }
.range-f { background-image: linear-gradient(#604010 1px, #0000d0 0 4px, #f0d8b0 0); }
.range-w { background-image: linear-gradient(90deg, #ff9800 93%, #0000d0 0); }
.range::-webkit-slider-thumb { appearance: none; width: 10px; height: 12px; background: #000; clip-path: polygon(0 0, 100% 0, 50% 100%); }
.ticks {
  height: 5px;
  margin: 3px 9px 0 54px;
  border-right: 1px solid #000;
  background:
    repeating-linear-gradient(90deg, #000 0 1px, transparent 1px 20%),
    repeating-linear-gradient(90deg, #000 0 1px, transparent 1px 4%) 0 0 / 100% 3px no-repeat;
}
.ticks-long { margin-right: 2px; }
.ticks-coarse {
  background:
    repeating-linear-gradient(90deg, #000 0 1px, transparent 1px calc(100% / 3)),
    repeating-linear-gradient(90deg, #000 0 1px, transparent 1px calc(100% / 15)) 0 0 / 100% 3px no-repeat;
}
.scale { display: flex; justify-content: space-between; margin: 0 2px 0 47px; font-size: 9px; line-height: 9px; }
.scale span { width: 16px; text-align: center; }
.scale-long { margin-right: -5px; }
.pager { display: flex; justify-content: center; gap: 15px; padding: 10px 0 0 4px; }
.page-btn { width: 19px; height: 19px; border: 1px solid #666; background: linear-gradient(#ccc, #999); }
.page-btn:disabled { border-color: #aaa; background: #bbb; }

.exit { display: grid; place-items: center; min-height: 96px; padding: 4px 0 0 8px; }
.exit-btn { width: 40px; height: 34px; border: 1px solid #777; border-radius: 3px; background: linear-gradient(#f5f5f5 48%, #dedede 52%, #d5d5d5); padding: 0 1px; }
```
